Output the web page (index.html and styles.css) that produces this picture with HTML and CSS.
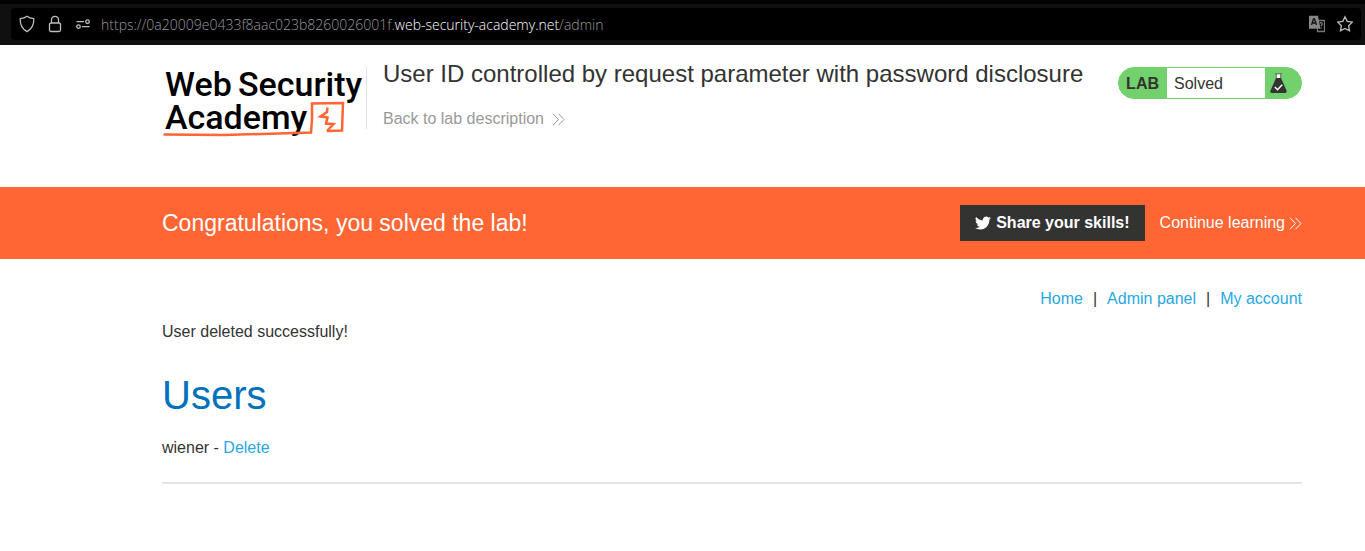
FILE: index.html
```html
<!DOCTYPE html>
<html lang="en">
<head>
<meta charset="utf-8">
<meta name="viewport" content="width=device-width, initial-scale=1">
<title>User ID controlled by request parameter with password disclosure</title>
<link rel="stylesheet" href="styles.css">
</head>
<body>
<div class="toolbar">
  <div class="address">
    <button class="tool" type="button" aria-label="Tracking protection">
      <svg width="16" height="18" viewBox="0 0 16 18"><path d="M8 1.200C6 2.700 4 3.300 1.200 3.700 1 9.500 2.500 13.500 8 16.600c5.500-3.100 7-7.100 6.800-12.900C12 3.300 10 2.700 8 1.200Z"/></svg>
    </button>
    <button class="tool" type="button" aria-label="Connection secure">
      <svg width="16" height="18" viewBox="0 0 16 18"><rect x="2.500" y="8" width="11" height="8.500" rx="1.500"/><path d="M4.500 8V4.800a3.500 3.500 0 0 1 7 0V8"/></svg>
    </button>
    <button class="tool" type="button" aria-label="Permissions">
      <svg width="16" height="18" viewBox="0 0 16 18"><path d="M1.500 6.700H9M7 11.600h7.500"/><circle cx="12.500" cy="6.700" r="1.800"/><circle cx="3.500" cy="11.600" r="1.800"/></svg>
    </button>
    <span class="url">https://0a20009e0433f8aac023b8260026001f.<span class="domain">web-security-academy.net</span>/admin</span>
    <button class="tool" type="button" aria-label="Translate page">
      <svg width="16" height="18" viewBox="0 0 16 18"><path class="page-back" d="M.5 1.500h8l2.200 11.500H.5Z"/><path class="page-front" d="M9.600 5.500h5.900v11H8.500v-3"/><path class="letter-a" d="m2.500 10 2-6h1l2 6M3.200 8h3.600"/><path class="page-front" d="M11 8.500c.3-1.300 2.500-1 2.300.5-.1 1-1.200 1-1.200 2.200m0 1.300v1"/></svg>
    </button>
    <button class="tool" type="button" aria-label="Bookmark page">
      <svg width="16" height="18" viewBox="0 0 16 18"><path d="m8 1.800 2.200 4.600 5.100.7-3.700 3.600.9 5.100L8 13.400l-4.500 2.400.9-5.100L.7 7.100l5.100-.7Z"/></svg>
    </button>
  </div>
</div>

<header class="container lab-header">
  <a class="logo" href="#" aria-label="Web Security Academy">
    <svg width="204" height="78" viewBox="0 0 204 78">
      <text x="3" y="37">Web</text><text x="76" y="37">Security</text><text x="3" y="70">Academy</text>
      <path d="M1.500 75.500 62 76l87-2.500 1-13V44.500l31-.5-1 27.500-15 .5"/>
      <path d="M165.500 48.500 165 53l-6.500 4.500 7 1-1.500 6 7.500.5-6.500 7"/>
    </svg>
  </a>
  <div class="heading">
    <h2>User ID controlled by request parameter with password disclosure</h2>
    <a class="back" href="#">Back to lab description
      <svg class="chevrons" width="13" height="13" viewBox="0 0 13 13"><path d="m1 .8 5.500 5.700L1 12.200M6.500.8 12 6.500l-5.500 5.700"/></svg>
    </a>
  </div>
  <div class="status">
    <span class="tag">LAB</span><span class="state">Solved</span>
    <span class="flask"><svg width="17" height="21" viewBox="0 0 17 21"><path class="neck" d="M6 1h5v5H6Z"/><path class="rim" d="M5 .8h7M6.300 1v4.500M10.700 1v4.500"/><path class="fill" d="M6 5h5l5.500 12.500c.5 1.500-.2 2.500-1.500 2.500H2c-1.300 0-2-1-1.500-2.500Z"/><path class="tick" d="m4.800 14 2.700 2.700 4.700-5"/></svg></span>
  </div>
</header>

<section class="banner">
  <div class="container banner-row">
    <h3>Congratulations, you solved the lab!</h3>
    <button class="share" type="button">
      <svg width="16" height="16" viewBox="0 0 24 24"><path d="M23.950 4.570a10 10 0 0 1-2.820.780 4.960 4.960 0 0 0 2.160-2.730c-.950.560-2 .960-3.130 1.190a4.920 4.920 0 0 0-8.380 4.480C7.690 8.100 4.070 6.130 1.640 3.160a4.920 4.920 0 0 0 1.520 6.570 4.900 4.900 0 0 1-2.230-.610v.060a4.920 4.920 0 0 0 3.950 4.830 5 5 0 0 1-2.210.080 4.940 4.940 0 0 0 4.600 3.420A9.870 9.870 0 0 1 0 19.540a14 14 0 0 0 7.550 2.210c9.050 0 14-7.500 14-13.980 0-.210 0-.420-.020-.630a9.940 9.940 0 0 0 2.420-2.570Z"/></svg>
      Share your skills!
    </button>
    <a class="continue" href="#">Continue learning
      <svg class="chevrons" width="13" height="13" viewBox="0 0 13 13"><path d="m1 .8 5.500 5.700L1 12.200M6.500.8 12 6.500l-5.500 5.700"/></svg>
    </a>
  </div>
</section>

<main class="container content">
  <nav class="links"><a href="#">Home</a><span>|</span><a href="#">Admin panel</a><span>|</span><a href="#">My account</a></nav>
  <p class="message">User deleted successfully!</p>
  <h1>Users</h1>
  <p class="user">wiener - <a href="#">Delete</a></p>
  <hr>
</main>
</body>
</html>
```
FILE: styles.css
```css
* {
  box-sizing: border-box;
}

body {
  margin: 0;
  background: #fff;
  color: #333332;
  font: 16px/24px "Liberation Sans", Arial, sans-serif;
}

h1, h2, h3, p {
  margin: 0;
  font-weight: 400;
}

a {
  color: #29a7df;
  text-decoration: none;
}

button {
  border: 0;
  padding: 0;
  background: none;
  font: inherit;
}

svg {
  display: block;
  flex: none;
}

.container {
  padding: 0 63px 0 162px;
}

.toolbar {
  padding: 8px 4px 5px 11px;
  background: linear-gradient(#020202 4px, #101010 4px);
}

.address {
  display: flex;
  align-items: center;
  gap: 12px;
  height: 32px;
  padding: 0 8px;
  border-radius: 4px;
  background: #000;
}

.tool svg {
  fill: none;
  stroke: #bdbdbd;
  stroke-width: 1.300;
}

.tool .page-back {
  fill: #888;
  stroke: #888;
}

.tool .page-front {
  stroke: #777;
}

.tool .letter-a {
  stroke: #111;
}

.url {
  flex: 1;
  overflow: hidden;
  margin-left: -2px;
  padding-top: 2px;
  color: #999;
  font: 300 14px/20px "Open Sans", sans-serif;
  white-space: nowrap;
}

.domain {
  color: #fff;
}

.lab-header {
  display: flex;
  align-items: flex-start;
  padding-top: 22px;
  padding-bottom: 50px;
}

.logo {
  flex: none;
  height: 78px;
  margin-top: -8px;
}

.logo text {
  fill: #000;
  font: 500 34px Roboto, sans-serif;
}

.logo path {
  fill: none;
  stroke: #ff6633;
  stroke-width: 2.500;
}

.heading {
  flex: 1;
  height: 62px;
  padding-left: 16px;
  border-left: 1px solid #e3e3e3;
}

.heading h2 {
  font-size: 24px;
  line-height: 14px;
}

.back {
  display: inline-flex;
  align-items: center;
  gap: 8px;
  margin-top: 26px;
  color: #999;
}

.chevrons {
  fill: none;
  stroke: currentColor;
  stroke-width: 1;
}

.status {
  display: flex;
  height: 32px;
  border: 1px solid #72d16c;
  border-radius: 16px;
  overflow: hidden;
  background: #72d16c;
  line-height: 32px;
}

.tag {
  padding: 0 8px 0 7px;
  font-weight: 700;
}

.state {
  width: 98px;
  padding-left: 7px;
  background: #fff;
}

.flask {
  width: 36px;
  padding: 5px;
}

.flask path {
  fill: none;
}

.flask .fill {
  fill: #333332;
}

.flask .neck {
  fill: #fff;
}

.flask .rim {
  stroke: #666;
}

.flask .tick {
  stroke: #fff;
  stroke-width: 1.500;
}

.banner {
  background: #ff6633;
  color: #fff;
}

.banner-row {
  display: flex;
  align-items: center;
  min-height: 72px;
}

.banner h3 {
  flex: 1;
  font-size: 23px;
}

.share {
  display: flex;
  align-items: center;
  gap: 5px;
  height: 36px;
  padding: 0 15px;
  background: #333332;
  color: #fff;
  font-weight: 700;
}

.share path {
  fill: #fff;
}

.continue {
  display: flex;
  align-items: center;
  gap: 4px;
  margin-left: 15px;
  color: #fff;
}

.content {
  padding-top: 28px;
}

.links {
  display: flex;
  justify-content: flex-end;
  gap: 10px;
}

.message {
  margin-top: 9px;
}

h1 {
  margin-top: 27px;
  color: #0071bc;
  font-size: 40px;
  line-height: 48px;
}

.user {
  margin-top: 17px;
}

hr {
  height: 2px;
  margin: 22px 0;
  border: 0;
  background: #e5e5e5;
}
```
